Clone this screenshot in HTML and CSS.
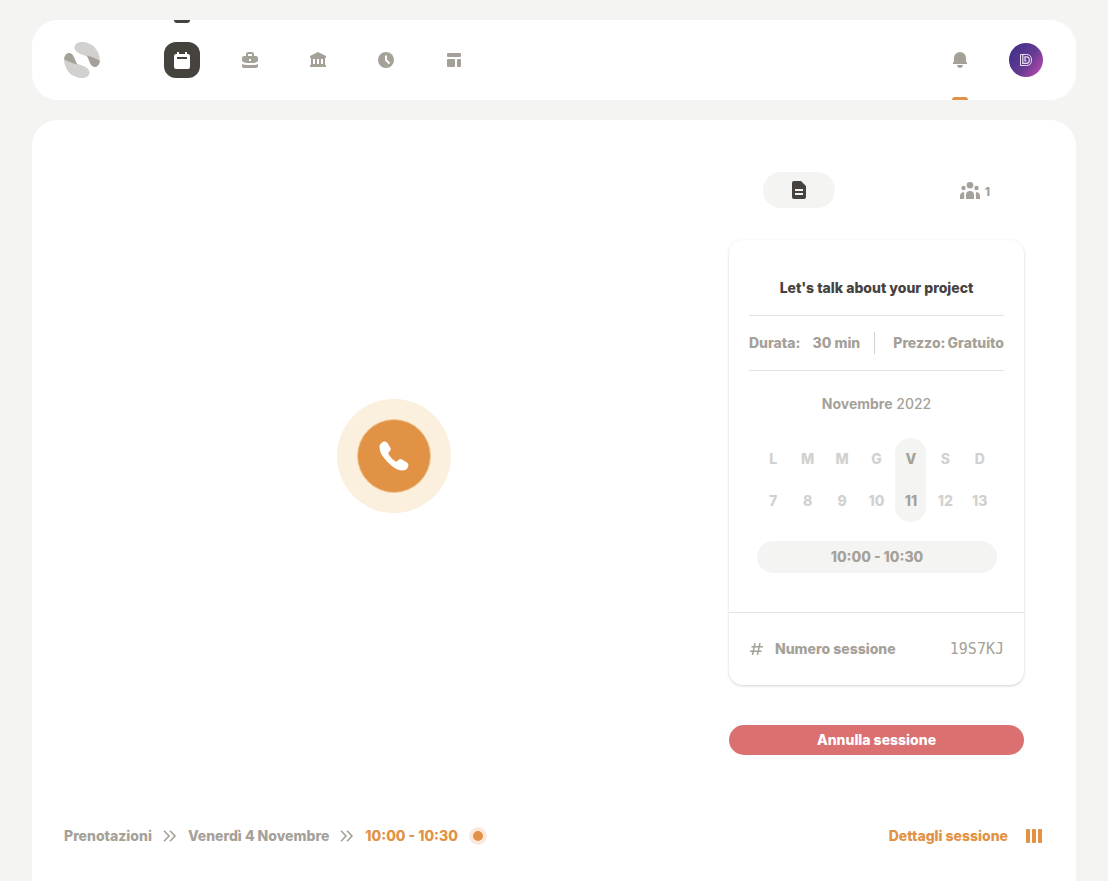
FILE: index.html
```html
<!DOCTYPE html>
<html lang="it">
<head>
<meta charset="utf-8">
<meta name="viewport" content="width=device-width, initial-scale=1">
<title>Sessione</title>
<link rel="stylesheet" href="styles.css">
</head>
<body>
<header class="topbar">
  <a class="logo" href="#" aria-label="Home">
    <svg width="36" height="36" viewBox="0 0 36 36">
      <g id="half">
        <path fill="#d2d1cf" d="M18 0C28 0 36 8 36 19C33 16.500 27 15.500 22.500 14C15 12 10.500 9.500 10.500 5.500C10.500 2 14 0 18 0Z"/>
        <path fill="#a5a199" d="M22.500 13.500C27 14.500 33 16.500 36 19C35.500 22.500 33.500 25.300 30.500 25C26 24.500 26 19 22.500 13.500Z"/>
      </g>
      <use href="#half" transform="rotate(180 18 18)"/>
    </svg>
  </a>
  <nav class="nav" aria-label="Principale">
    <a class="nav-item nav-active" href="#" aria-label="Calendario">
      <svg width="16" height="17" viewBox="0 0 16 17"><path fill="#fff" fill-rule="evenodd" d="M3 0h2v2h6V0h2v2h1q2 0 2 2v11q0 2-2 2H2q-2 0-2-2V4q0-2 2-2h1ZM3 5v2h10V5Z"/></svg>
    </a>
    <a class="nav-item" href="#" aria-label="Servizi">
      <svg width="16" height="16" viewBox="0 0 16 16"><path fill="#a5a199" fill-rule="evenodd" d="M4 4V2.500Q4 0 6.500 0h3Q12 0 12 2.500V4h2q2 0 2 2v3q-2 2-5 2H5q-3 0-5-2V6q0-2 2-2ZM6 4h4V2.500Q10 2 9.500 2h-3Q6 2 6 2.500ZM7 7v2h2V7ZM0 12q2 1 5 1h6q3 0 5-1v2q0 2-2 2H2q-2 0-2-2Z"/></svg>
    </a>
    <a class="nav-item" href="#" aria-label="Banca">
      <svg width="16" height="16" viewBox="0 0 16 16"><path fill="#a5a199" fill-rule="evenodd" d="M8 0l8 4v2h-1v7h1v2H0v-2h1V6H0V4ZM3 7v5h2V7ZM7 7v5h2V7ZM11 7v5h2V7Z"/></svg>
    </a>
    <a class="nav-item" href="#" aria-label="Orari">
      <svg width="16" height="16" viewBox="0 0 16 16"><circle cx="8" cy="8" r="8" fill="#a5a199"/><path d="M8 3.500V8l3.500 3.500" fill="none" stroke="#fff" stroke-width="2"/></svg>
    </a>
    <a class="nav-item" href="#" aria-label="Pagina">
      <svg width="14" height="14" viewBox="0 0 14 14" fill="#a5a199"><rect width="14" height="4" rx="1"/><rect y="6" width="8" height="8" rx="1"/><rect x="10" y="6" width="4" height="8" rx="1"/></svg>
    </a>
  </nav>
  <button class="bell" type="button" aria-label="Notifiche">
    <svg width="14" height="16" viewBox="0 0 14 16"><path fill="#a5a199" d="M1 10V6a6 6 0 0 1 12 0v4h1v2H0v-2ZM4 13h6q-.5 3-3 3T4 13Z"/></svg>
  </button>
  <button class="avatar" type="button" aria-label="Profilo">
    <svg width="12" height="12" viewBox="0 0 12 12" fill="none" stroke="#eadff2"><path d="M.5 .5H6.500Q11.500 .5 11.500 6T6.500 11.500H.5Z"/><path d="M2.800 .5V9.300H6.500Q9.300 9.300 9.300 6T6.500 2.800H5V7H6.500" stroke-width="1.200"/></svg>
  </button>
</header>
<main class="panel">
  <div class="content">
    <section class="stage">
      <button class="call" type="button" aria-label="Avvia chiamata">
        <span class="call-core">
          <svg width="30" height="30" viewBox="0 0 30 30"><path fill="#fff" d="M5.500 .5Q7.500 .3 8.500 2L11.500 7Q12.300 8.500 11 10L9.500 11.500Q9 12.500 10 14Q12.500 18 16 20Q17.500 21 18.500 20L20 18.500Q21.500 17.500 23 18.500L28 21.500Q30 23 29.300 25L28.500 27Q27 29.500 23 29.500Q17 29.500 9 21.500Q.5 13 .5 6.500Q.5 3 3 1.500Q4 .7 5.500 .5Z"/></svg>
        </span>
      </button>
    </section>
    <aside class="details">
      <div class="tabs">
        <button class="tab tab-active" type="button" aria-label="Documento">
          <svg width="14" height="18" viewBox="0 0 14 18"><path fill="#46423e" fill-rule="evenodd" d="M2 0h7l5 5v11q0 2-2 2H2q-2 0-2-2V2Q0 0 2 0ZM3 8v2h8V8ZM3 12v2h8v-2Z"/></svg>
        </button>
        <button class="tab people" type="button" aria-label="Partecipanti: 1">
          <svg width="20" height="17" viewBox="0 0 20 17" fill="#a5a199"><circle cx="10" cy="3.300" r="3.300"/><circle cx="3.500" cy="6" r="2.200"/><circle cx="16.500" cy="6" r="2.200"/><path d="M6 17v-4q0-4 4-4t4 4v4ZM0 17v-3q0-3.500 4-4Q4.500 13 4 17ZM20 17v-3q0-3.500-4-4q-.5 3 0 7Z"/></svg>
          <span>1</span>
        </button>
      </div>
      <article class="card">
        <div class="card-body">
          <h1 class="title">Let's talk about your project</h1>
          <div class="facts">
            <span class="fact fact-duration"><span>Durata:</span><span>30 min</span></span>
            <span class="fact fact-price"><span>Prezzo:</span><span>Gratuito</span></span>
          </div>
          <p class="month"><b>Novembre</b> 2022</p>
          <div class="week">
            <div class="day"><span>L</span><span>7</span></div>
            <div class="day"><span>M</span><span>8</span></div>
            <div class="day"><span>M</span><span>9</span></div>
            <div class="day"><span>G</span><span>10</span></div>
            <div class="day day-active"><span>V</span><span>11</span></div>
            <div class="day"><span>S</span><span>12</span></div>
            <div class="day"><span>D</span><span>13</span></div>
          </div>
          <p class="slot">10:00 - 10:30</p>
        </div>
        <div class="card-foot">
          <svg width="14" height="12" viewBox="0 0 14 12" fill="none" stroke="#a5a199" stroke-width="1.500"><path d="M6 0L3.500 12M11 0L8.500 12M2.500 3.800H14M1 8.300H12.500"/></svg>
          <span>Numero sessione</span>
          <span class="code">19S7KJ</span>
        </div>
      </article>
      <button class="cancel" type="button">Annulla sessione</button>
    </aside>
  </div>
  <footer class="bottom">
    <nav class="crumbs" aria-label="Percorso">
      <a href="#">Prenotazioni</a>
      <svg width="14" height="12" viewBox="0 0 14 12" fill="none" stroke="#a5a199" stroke-width="1.600"><path d="M1 .7L6 6L1 11.300M7 .7L12 6L7 11.300"/></svg>
      <a href="#">Venerdì 4 Novembre</a>
      <svg width="14" height="12" viewBox="0 0 14 12" fill="none" stroke="#a5a199" stroke-width="1.600"><path d="M1 .7L6 6L1 11.300M7 .7L12 6L7 11.300"/></svg>
      <a class="current" href="#">10:00 - 10:30</a>
      <span class="dot"></span>
    </nav>
    <button class="toggle" type="button">Dettagli sessione
      <svg width="16" height="14" viewBox="0 0 16 14" fill="#e29244"><rect width="4" height="14" rx="1"/><rect x="6" width="4" height="14" rx="1"/><rect x="12" width="4" height="14" rx="1"/></svg>
    </button>
  </footer>
</main>
</body>
</html>
```
FILE: styles.css
```css
:root {
  --bg: #f4f4f2;
  --muted: #a5a199;
  --faint: #d2d1cf;
  --dark: #46423e;
  --accent: #e29244;
}

* { box-sizing: border-box; }

body {
  margin: 0;
  padding: 20px 32px 0;
  min-height: 100vh;
  display: flex;
  flex-direction: column;
  gap: 20px;
  background: var(--bg);
  color: var(--muted);
  font: 800 14px/20px Inter, "Liberation Sans", sans-serif;
}

svg { display: block; }
h1, p { margin: 0; }
a { color: inherit; text-decoration: none; }

button {
  padding: 0;
  border: 0;
  background: none;
  color: inherit;
  font: inherit;
  cursor: pointer;
}

.topbar {
  height: 80px;
  padding: 0 32px;
  display: flex;
  align-items: center;
  background: #fff;
  border-radius: 26px;
}

.nav {
  height: 100%;
  margin-left: 64px;
  flex: 1;
  display: flex;
  align-items: center;
  gap: 32px;
}

.nav-item {
  width: 36px;
  height: 36px;
  display: grid;
  place-items: center;
  border-radius: 12px;
}

.nav-active {
  position: relative;
  background: var(--dark);
}

.nav-active::before {
  content: "";
  position: absolute;
  top: -22px;
  left: 10px;
  width: 16px;
  height: 3px;
  border-radius: 0 0 3px 3px;
  background: var(--dark);
}

.bell {
  position: relative;
  width: 36px;
  height: 80px;
  margin-right: 31px;
  display: grid;
  place-items: center;
}

.bell::after {
  content: "";
  position: absolute;
  bottom: 0;
  left: 10px;
  width: 16px;
  height: 3px;
  border-radius: 3px 3px 0 0;
  background: var(--accent);
}

.avatar {
  width: 34px;
  height: 34px;
  margin-right: 1px;
  display: grid;
  place-items: center;
  border-radius: 50%;
  background: linear-gradient(125deg, #46308a 15%, #643b91 55%, #b448ae 90%);
}

.panel {
  flex: 1;
  padding: 32px 32px 28px;
  background: #fff;
  border-radius: 26px 26px 0 0;
}

.content { display: flex; }

.stage {
  flex: 1;
  padding-left: 15px;
  display: grid;
  place-items: center;
}

.call {
  width: 114px;
  height: 114px;
  display: grid;
  place-items: center;
  border-radius: 50%;
  background: #fbefde;
}

.call-core {
  width: 74px;
  height: 74px;
  display: grid;
  place-items: center;
  border: 1px solid #f0cb9b;
  border-radius: 50%;
  background: var(--accent);
}

.details {
  width: 335px;
  padding: 20px 20px 5px;
}

.tabs {
  padding: 0 34px;
  display: flex;
  justify-content: space-between;
}

.tab {
  height: 36px;
  display: flex;
  align-items: center;
  justify-content: center;
  gap: 5px;
}

.tab-active {
  width: 72px;
  border-radius: 18px;
  background: var(--bg);
}

.people { font-size: 12px; }
.people span { padding-top: 4px; }

.card {
  margin-top: 32px;
  border-radius: 14px;
  box-shadow: 0 1px 3px rgba(0, 0, 0, .18);
}

.card-body { padding: 38px 20px 39px; }

.title {
  padding-bottom: 17px;
  border-bottom: 1px solid #e2e2e0;
  color: var(--dark);
  font-size: 14px;
  font-weight: 800;
  line-height: 20px;
  text-align: center;
}

.facts {
  padding: 16px 0;
  display: flex;
  justify-content: space-between;
  border-bottom: 1px solid #e2e2e0;
}

.fact {
  display: flex;
  line-height: 22px;
}

.fact-duration {
  gap: 12px;
  padding-right: 14px;
  border-right: 1px solid #d2d1cf;
}

.fact-price { gap: 2px; }

.month {
  padding: 23px 0 24px;
  font-weight: 500;
  text-align: center;
}

.month b { font-weight: 700; }

.week {
  padding: 0 7px;
  display: grid;
  grid-template-columns: repeat(7, 1fr);
  justify-items: center;
  color: var(--faint);
}

.day {
  width: 31px;
  display: grid;
  line-height: 42px;
  text-align: center;
  border-radius: 16px;
}

.day-active {
  background: var(--bg);
  color: var(--muted);
}

.slot {
  margin: 19px 7px 0 8px;
  border-radius: 16px;
  background: var(--bg);
  line-height: 32px;
  text-align: center;
}

.card-foot {
  padding: 26px 20px;
  display: flex;
  align-items: center;
  gap: 12px;
  border-top: 1px solid #e2e2e0;
}

.code {
  margin-left: auto;
  font: 400 15px/20px "DejaVu Sans Mono", monospace;
}

.cancel {
  width: 100%;
  height: 30px;
  margin-top: 40px;
  border-radius: 15px;
  background: #da7070;
  color: #fff;
}

.bottom {
  margin-top: 66px;
  display: flex;
  align-items: center;
  justify-content: space-between;
}

.crumbs {
  display: flex;
  align-items: center;
  gap: 11px;
}

.current { color: var(--accent); }

.dot {
  width: 18px;
  height: 18px;
  border: 4px solid #fbe9dd;
  border-radius: 50%;
  background: var(--accent);
}

.toggle {
  display: flex;
  align-items: center;
  gap: 18px;
  margin-right: 2px;
  color: var(--accent);
}
```
